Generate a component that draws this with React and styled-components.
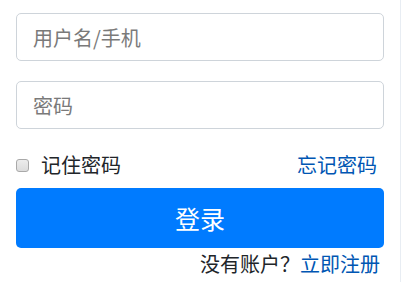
import React from "react";
import styled, { createGlobalStyle } from "styled-components";

const Global = createGlobalStyle`
  html, body { margin: 0; padding: 0; background: #fff; }
  body { font-family: "Noto Sans CJK SC", "Noto Sans", sans-serif; }
  * { box-sizing: border-box; }
`;

const Panel = styled.div`
  width: 401px;
  height: 282px;
  border-right: 1px solid #e8edf3;
  padding: 13px 16px 0 16px;
  display: flex;
  flex-direction: column;
`;

const Field = styled.input`
  display: block;
  width: 100%;
  height: 48px;
  margin: 0 0 ${(p) => p.$gap}px 0;
  padding: 0 16px;
  border: 1px solid #ced4da;
  border-radius: 5px;
  font-family: inherit;
  font-size: 20px;
  color: #495057;
  background: #fff;
  outline: none;
  &::placeholder { color: #7a7a7a; }
`;

const Row = styled.div`
  display: flex;
  align-items: center;
  justify-content: space-between;
  height: 24px;
  margin-top: 2px;
`;

const Remember = styled.label`
  display: flex;
  align-items: center;
  gap: 12px;
  font-size: 20px;
  line-height: 24px;
  color: #212529;
`;

const Check = styled.input`
  appearance: none;
  margin: 0;
  width: 13px;
  height: 13px;
  border: 1px solid #a9a9a9;
  border-radius: 3px;
  background: linear-gradient(#ececec, #dcdcdc);
`;

const Link = styled.a`
  color: #0056b3;
  text-decoration: none;
  font-size: 20px;
  line-height: 24px;
  margin-right: ${(p) => p.$mr || 0}px;
`;

const Button = styled.button`
  margin-top: 11px;
  width: 100%;
  height: 60px;
  border: none;
  border-radius: 5px;
  background: #007bff;
  color: #fff;
  font-family: inherit;
  font-size: 25px;
`;

const Footer = styled.div`
  margin-top: 4px;
  display: flex;
  justify-content: flex-end;
  padding-right: 4px;
  font-size: 20px;
  line-height: 24px;
  color: #212529;
`;

export default function App() {
  return (
    <>
      <Global />
      <Panel>
        <Field $gap={20} placeholder="用户名/手机" />
        <Field $gap={22} type="password" placeholder="密码" />
        <Row>
          <Remember>
            <Check type="checkbox" />
            记住密码
          </Remember>
          <Link href="#" $mr={7}>忘记密码</Link>
        </Row>
        <Button>登录</Button>
        <Footer>
          没有账户？<Link href="#">立即注册</Link>
        </Footer>
      </Panel>
    </>
  );
}
